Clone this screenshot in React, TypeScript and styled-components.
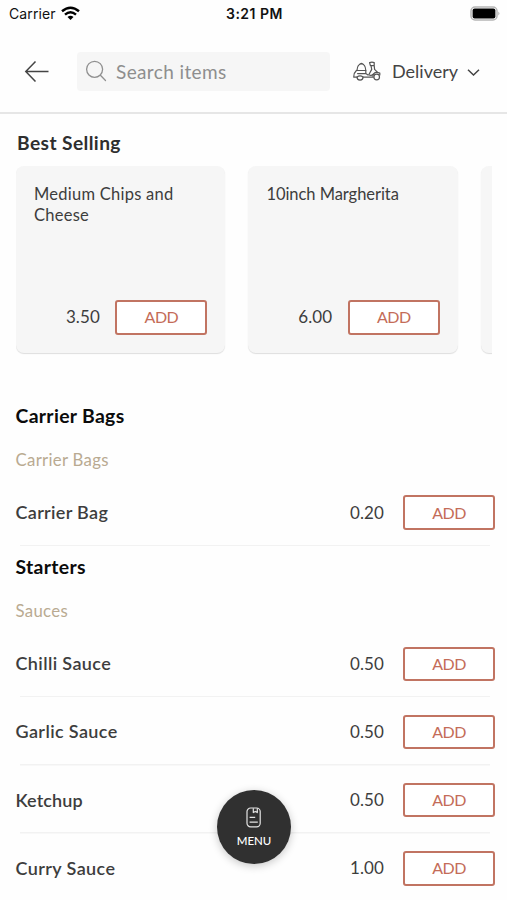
import React from 'react';
import styled, { createGlobalStyle } from 'styled-components';

const GlobalStyle = createGlobalStyle`
  * { box-sizing: border-box; }
  html, body { margin: 0; height: 900px; overflow: hidden; background: #fefefe; }
  body { font-family: Lato, sans-serif; color: #3d3d3d; }
  button { font: inherit; }
`;

const Screen = styled.div`
  width: 507px;
  height: 900px;
  overflow: hidden;
  position: relative;
  background: #fefefe;
`;

const StatusBar = styled.div`
  height: 27px;
  padding: 0 7px 0 9px;
  display: grid;
  grid-template-columns: 1fr auto 1fr;
  align-items: center;
  font-family: Inter, sans-serif;
  font-size: 14px;
  color: #111;
`;

const Carrier = styled.div`
  display: flex;
  align-items: center;
  gap: 5.5px;
  letter-spacing: 0.1px;
`;

const Clock = styled.div`
  font-weight: 600;
  font-size: 14px;
  letter-spacing: 0.5px;
`;

const BatterySlot = styled.div`
  display: flex;
  justify-content: flex-end;
`;

const Header = styled.header`
  height: 87px;
  padding: 3px 27px 0 24px;
  display: flex;
  align-items: center;
  border-bottom: 2px solid #e6e6e6;
`;

const SearchBox = styled.div`
  width: 253px;
  height: 39px;
  margin-left: 28px;
  padding-left: 8px;
  display: flex;
  align-items: center;
  gap: 9px;
  border-radius: 4px;
  background: #f6f6f6;
  color: #8e8e8e;
  font-size: 19px;
  letter-spacing: 0.38px;
`;

const Delivery = styled.div`
  margin-left: 23px;
  display: flex;
  align-items: center;
  font-size: 18px;
  color: #444;
  white-space: nowrap;
`;

const DeliveryLabel = styled.span`
  width: 66px;
  margin: 0 9px 0 11px;
`;

const BestSelling = styled.section`
  padding: 17px 15px 0 16px;
  height: 281px;
`;

const BestTitle = styled.h2`
  margin: 0 0 12px 1px;
  font-size: 19.2px;
  line-height: 23px;
  font-weight: 700;
  letter-spacing: 0.4px;
  color: #2e2e2e;
`;

const Carousel = styled.div`
  display: flex;
  gap: 23px;
  overflow: hidden;
  height: 190px;
`;

const Card = styled.article`
  flex: 0 0 209.4px;
  height: 187px;
  padding: 18px 18px 18.5px 18px;
  display: flex;
  flex-direction: column;
  justify-content: space-between;
  border-radius: 8px;
  background: #f6f6f6;
  box-shadow: 0 1px 1px #dedede;
`;

const CardName = styled.div<{ $tracking?: number }>`
  max-width: 160px;
  font-size: 16.5px;
  line-height: 21px;
  letter-spacing: ${p => p.$tracking ?? 0.3}px;
`;

const Purchase = styled.div<{ $gap: number }>`
  display: flex;
  align-items: center;
  justify-content: flex-end;
  gap: ${p => p.$gap}px;
`;

const Price = styled.span`
  font-size: 17px;
  letter-spacing: 0.1px;
  padding-bottom: 1px;
`;

const AddButton = styled.button`
  width: 92px;
  height: 34.5px;
  padding: 0 0 1px;
  border: 2px solid #c17462;
  border-radius: 3px;
  background: #fff;
  color: #c46c58;
  font-size: 16px;
  line-height: 29px;
  letter-spacing: -0.5px;
`;

const Section = styled.section``;

const SectionTitle = styled.h2`
  margin: 0;
  padding-left: 15.5px;
  font-size: 19.4px;
  line-height: 42px;
  font-weight: 700;
  letter-spacing: 0.32px;
  color: #0b0b0b;
`;

const Subtitle = styled.h3`
  margin: 0;
  height: 41px;
  padding: 5px 0 0 15.5px;
  font-size: 16.8px;
  line-height: 36px;
  font-weight: 400;
  letter-spacing: 0.3px;
  color: #b9aa91;
`;

const Row = styled.div`
  height: 68.2px;
  padding: 1px 12px 0 15.5px;
  display: flex;
  align-items: center;
  justify-content: space-between;
  background: linear-gradient(#f2f2f2, #f2f2f2) 20px 100% / 470px 1.5px no-repeat;
`;

const ItemName = styled.span<{ $tracking: number }>`
  font-size: 18px;
  font-weight: 600;
  padding-bottom: 1px;
  letter-spacing: ${p => p.$tracking}px;
`;

const MenuButton = styled.button`
  position: absolute;
  left: 217px;
  top: 790px;
  width: 74px;
  height: 74px;
  border: 0;
  border-radius: 50%;
  padding: 1px 0 0;
  display: flex;
  flex-direction: column;
  align-items: center;
  justify-content: center;
  gap: 6px;
  background: #303030;
  box-shadow: 0 2px 8px rgba(0, 0, 0, 0.22);
  color: #fff;
  font-size: 11.5px;
  font-weight: 500;
  line-height: 14px;
`;

const WifiIcon = () => (
  <svg width="19" height="15" viewBox="0 0 19 15" fill="none" stroke="#000" strokeWidth="2.5">
    <path d="M1 5.2Q9.5-1.8 18 5.2" />
    <path d="M4 8.6Q9.5 4 15 8.6" />
    <path d="M9.5 14L6.5 10.9Q9.5 8.8 12.5 10.9Z" fill="#000" stroke="none" />
  </svg>
);

const BatteryIcon = () => (
  <svg width="31" height="15" viewBox="0 0 31 15">
    <rect x="2" y="1" width="26" height="13" rx="4" fill="#fff" stroke="#b5b5b5" strokeWidth="1.5" />
    <rect x="3.6" y="2.6" width="22.8" height="9.8" rx="2" fill="#000" />
    <path d="M29.4 5.4Q31.4 7.5 29.4 9.6Z" fill="#aaa" />
  </svg>
);

const BackIcon = () => (
  <svg width="25" height="22" viewBox="0 0 25 22" fill="none" stroke="#444" strokeWidth="1.5">
    <path d="M24.5 11.5H2M11.5 1.5L1.8 11.5l9.7 10" />
  </svg>
);

const SearchIcon = () => (
  <svg width="22" height="22" viewBox="0 0 22 22" fill="none" stroke="#909090" strokeWidth="1.3" strokeLinecap="round">
    <circle cx="9.6" cy="9.3" r="8" />
    <path d="M15.4 15.2L20.5 20.5" />
  </svg>
);

const ScooterIcon = () => (
  <svg width="28" height="20" viewBox="0 0 28 20" fill="none" stroke="#555" strokeWidth="1.2" strokeLinecap="round" strokeLinejoin="round">
    <path d="M4 9.5Q4.4 3 8.4 3T12.8 9.5M6.3 3.7Q8.4 1 10.6 3.7" />
    <path d="M3.4 9.5H12.8V12.6H4.6M3.4 9.5Q.6 12 .8 16.2H4M10.1 16.2H20.3M12.8 12.6L15 14" />
    <path d="M4 16a3 3 0 0 0 6.1 0M4 16q3-2.4 6.1 0" />
    <path d="M16.6 1.6Q19 .6 21.2 1.6V4.6H17.4ZM18 4.6l.7 3.8-2.9 5.4q2.6 1.6 4.4-.6M21.2 4.6L21.6 8.4 24.6 11.4" />
    <circle cx="23.7" cy="16" r="2.8" />
    <path d="M19.8 15.2Q20.8 9.6 26.8 12V14" />
  </svg>
);

const ChevronIcon = () => (
  <svg width="13" height="9" viewBox="0 0 13 9" fill="none" stroke="#444" strokeWidth="1.5">
    <path d="M1 2.8l5.5 5.2L12 2.8" />
  </svg>
);

const MenuIcon = () => (
  <svg width="16" height="21" viewBox="0 0 16 21" fill="none" stroke="#e4e4e4" strokeWidth="1.2" strokeLinejoin="round">
    <rect x="1" y="1" width="13.2" height="18.8" rx="3.6" />
    <path d="M7.3 1.2v4.4l2-1.2 2 1.2v-4.4M3.6 10.4h5.6M3.6 15.1h8.2" />
  </svg>
);

const bestSellers = [
  { name: 'Medium Chips and Cheese', price: '3.50', tracking: 0.25 },
  { name: '10inch Margherita', price: '6.00', tracking: -0.05 },
];

const sections = [
  {
    title: 'Carrier Bags',
    subtitle: 'Carrier Bags',
    items: [{ name: 'Carrier Bag', price: '0.20', tracking: 0.32 }],
  },
  {
    title: 'Starters',
    subtitle: 'Sauces',
    items: [
      { name: 'Chilli Sauce', price: '0.50', tracking: 0.38 },
      { name: 'Garlic Sauce', price: '0.50', tracking: 0.38 },
      { name: 'Ketchup', price: '0.50', tracking: 0.12 },
      { name: 'Curry Sauce', price: '1.00', tracking: 0.4 },
    ],
  },
];

export default function App() {
  return (
    <Screen>
      <GlobalStyle />
      <StatusBar>
        <Carrier>Carrier <WifiIcon /></Carrier>
        <Clock>3:21 PM</Clock>
        <BatterySlot><BatteryIcon /></BatterySlot>
      </StatusBar>
      <Header>
        <BackIcon />
        <SearchBox><SearchIcon />Search items</SearchBox>
        <Delivery>
          <ScooterIcon />
          <DeliveryLabel>Delivery</DeliveryLabel>
          <ChevronIcon />
        </Delivery>
      </Header>
      <BestSelling>
        <BestTitle>Best Selling</BestTitle>
        <Carousel>
          {bestSellers.map(item => (
            <Card key={item.name}>
              <CardName $tracking={item.tracking}>{item.name}</CardName>
              <Purchase $gap={15.5}>
                <Price>{item.price}</Price>
                <AddButton>ADD</AddButton>
              </Purchase>
            </Card>
          ))}
          <Card />
        </Carousel>
      </BestSelling>
      {sections.map(section => (
        <Section key={section.title}>
          <SectionTitle>{section.title}</SectionTitle>
          <Subtitle>{section.subtitle}</Subtitle>
          {section.items.map(item => (
            <Row key={item.name}>
              <ItemName $tracking={item.tracking}>{item.name}</ItemName>
              <Purchase $gap={19}>
                <Price>{item.price}</Price>
                <AddButton>ADD</AddButton>
              </Purchase>
            </Row>
          ))}
        </Section>
      ))}
      <MenuButton><MenuIcon />MENU</MenuButton>
    </Screen>
  );
}
